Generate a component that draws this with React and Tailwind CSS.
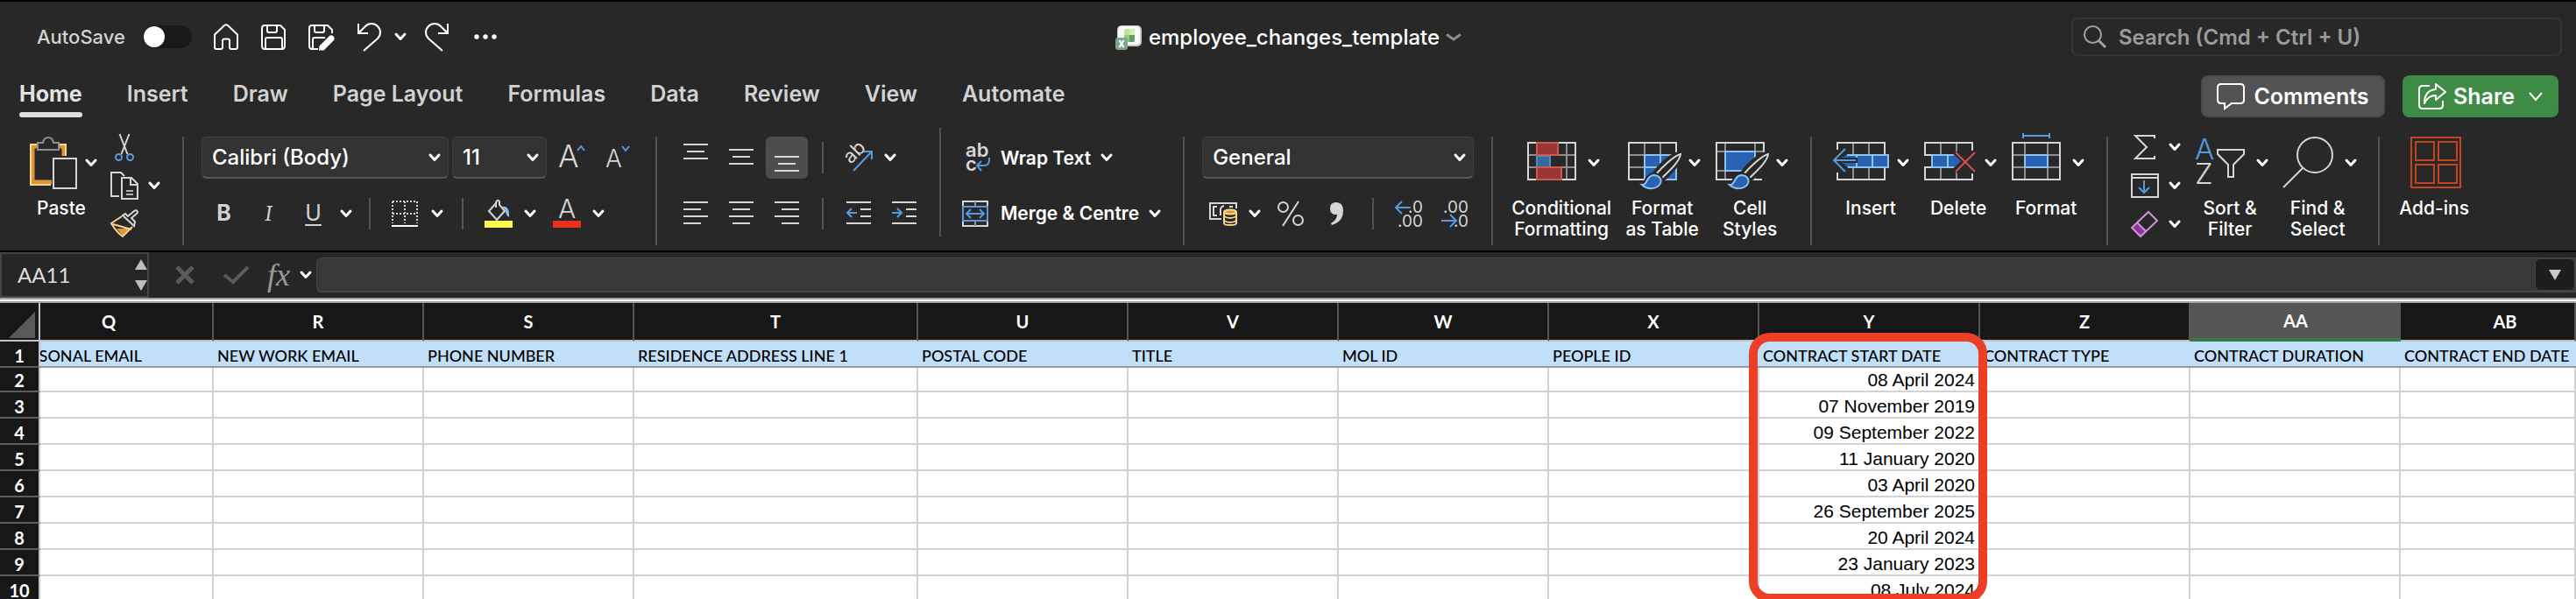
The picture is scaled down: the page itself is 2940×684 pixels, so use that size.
import clsx from 'clsx';

const LINE = '#d6d6d6';
const DIM = '#8f8f8f';
const SKY = '#559bde';
const FILL = '#2962b0';
const EDGE = '#8ec0f0';
const PANEL = '#282828';

const Icon = ({ w, h, children, className }) => (
  <svg
    width={w}
    height={h}
    viewBox={`0 0 ${w} ${h}`}
    fill="none"
    stroke={LINE}
    strokeWidth="2"
    aria-hidden="true"
    className={clsx('shrink-0 overflow-visible', className)}
  >
    {children}
  </svg>
);

const Chevron = ({ className }) => (
  <Icon w={12} h={8} className={className}>
    <path d="M1 1L6 6.500L11 1" stroke="white" strokeWidth="3" strokeLinecap="round" strokeLinejoin="round" />
  </Icon>
);

const Divider = ({ className }) => <div className={clsx('w-0.5 shrink-0 bg-[#535353]', className)} />;

const tabs = ['Home', 'Insert', 'Draw', 'Page Layout', 'Formulas', 'Data', 'Review', 'View', 'Automate'];

const TitleBar = () => (
  <header className="grid h-20 grid-cols-[1fr_auto_1fr] items-center">
    <div className="flex items-center pl-[42px]">
      <label htmlFor="autosave" className="text-[22px] font-medium text-[#d2d2d2]">AutoSave</label>
      <span className="relative ml-5 flex h-[26px] w-14 rounded-full bg-[#191919]">
        <input id="autosave" type="checkbox" role="switch" className="peer h-full w-full appearance-none" />
        <span className="pointer-events-none absolute left-px top-px h-6 w-6 rounded-full bg-white" />
      </span>
      <button aria-label="Home page" className="ml-6">
        <Icon w={30} h={32}>
          <path d="M2 13.500L13 3Q15 1.500 17 3L28 13.500V28Q28 30 26 30H21Q19 30 19 28V20.500Q19 18.500 17 18.500H13Q11 18.500 11 20.500V28Q11 30 9 30H4Q2 30 2 28Z" stroke="white" />
        </Icon>
      </button>
      <button aria-label="Save" className="ml-6">
        <Icon w={30} h={32}>
          <path d="M5 3H23L28 8V26Q28 30 25 30H5Q2 30 2 26V6Q2 3 5 3ZM8 3V9Q8 11 10 11H17Q19 11 19 9V3M6 30V19Q6 17 8 17H23Q25 17 25 19V30" stroke="white" />
        </Icon>
      </button>
      <button aria-label="Save as" className="ml-6">
        <Icon w={32} h={32}>
          <path d="M28 12V8L23 3H5Q2 3 2 6V26Q2 30 5 30H12M8 3V9Q8 11 10 11H17Q19 11 19 9V3M6 30V19Q6 17 8 17H20" stroke="white" />
          <path d="M17 28L27 18" stroke="white" strokeWidth="7" strokeLinecap="round" />
          <path d="M13 32L14 26L18 30Z" fill="white" stroke="none" />
        </Icon>
      </button>
      <button aria-label="Undo" className="ml-6">
        <Icon w={28} h={32}>
          <path d="M2 1V12H13M2 12L10 4C14 0 20 0 24 4C28 8 28 14 24 18L8 32" stroke="white" />
        </Icon>
      </button>
      <button aria-label="Undo history" className="ml-4"><Chevron /></button>
      <button aria-label="Redo" className="ml-[22px]">
        <Icon w={28} h={32}>
          <path d="M26 1V12H15M26 12L18 4C14 0 8 0 4 4C0 8 0 14 4 18L20 32" stroke="white" />
        </Icon>
      </button>
      <button aria-label="More commands" className="ml-7">
        <Icon w={26} h={6}>
          <g fill="white" stroke="none">
            <circle cx="3" cy="3" r="2.700" />
            <circle cx="13" cy="3" r="2.700" />
            <circle cx="23" cy="3" r="2.700" />
          </g>
        </Icon>
      </button>
    </div>

    <button className="flex items-center pt-0.5">
      <Icon w={30} h={28}>
        <g stroke="none">
          <rect x="2" y="0" width="28" height="24" rx="5" fill="#c9c9c9" />
          <rect x="3" y="1" width="25" height="21" rx="4" fill="#fafafa" />
          <path d="M10 6Q10 4 12 4H22V11H10Z" fill="#b9e6a4" />
          <path d="M16 4H20Q22 4 22 6V11H16Z" fill="#cdf0b0" />
          <path d="M10 11H16V19H10Z" fill="#8fc98a" />
          <path d="M16 11H22V17Q22 19 20 19H16Z" fill="#619a66" />
          <rect x="0" y="14" width="14" height="14" rx="3" fill="#7ba88b" />
        </g>
        <path d="M4.500 17L9.500 25M9.500 17L4.500 25" stroke="white" strokeWidth="2.200" />
      </Icon>
      <span className="ml-2 text-[24px] font-medium text-white">employee_changes_template</span>
      <Icon w={16} h={8} className="ml-2">
        <path d="M1 1L8 6L15 1" stroke="#8c8c8c" strokeWidth="3" strokeLinecap="round" strokeLinejoin="round" />
      </Icon>
    </button>

    <div className="mr-4 flex h-11 w-[560px] items-center justify-self-end rounded-lg border-2 border-[#363636] pl-3">
      <Icon w={26} h={26}>
        <circle cx="10.500" cy="10.500" r="9.500" stroke="#a2a2a2" />
        <path d="M17.500 17.500L25 25" stroke="#a2a2a2" strokeWidth="3" />
      </Icon>
      <input
        type="text"
        aria-label="Search"
        placeholder="Search (Cmd + Ctrl + U)"
        className="ml-3.5 w-full bg-transparent pt-0.5 text-[24px] font-semibold text-white outline-none placeholder:text-[#9b9b9b]"
      />
    </div>
  </header>
);

const TabBar = () => (
  <div className="flex h-[54px] items-end justify-between pb-0.5 pl-[22px] pr-5">
    <nav className="flex gap-[51px]">
      {tabs.map((tab, i) => (
        <a
          key={tab}
          href="#"
          className={clsx('text-[25px] leading-7', i === 0 ? 'font-bold text-[#e2e2e2]' : 'font-semibold text-[#d2d2d2]')}
        >
          {tab}
          <span className={clsx('mt-[7px] block h-1.5 rounded-full', i === 0 && 'bg-[#dedede]')} />
        </a>
      ))}
    </nav>
    <div className="flex gap-5">
      <button className="flex h-12 w-[210px] items-center justify-center gap-2.5 rounded-lg border-2 border-[#4b4b4b] bg-[#535353] text-[25px] font-semibold text-white">
        <Icon w={32} h={32}>
          <path d="M5 2H27Q31 2 31 6V20Q31 24 27 24H17L9 30V24H5Q1 24 1 20V6Q1 2 5 2Z" stroke="white" />
        </Icon>
        <span className="pt-0.5">Comments</span>
      </button>
      <button className="flex h-12 w-[178px] items-center justify-center rounded-lg bg-[#3e8b46] text-[25px] font-semibold text-white">
        <Icon w={32} h={32}>
          <path d="M13 4H5Q1 4 1 8V26Q1 30 5 30H24Q28 30 28 26V21" stroke="white" />
          <path d="M7 24Q7 9 20 8V2L31 11L20 20V15Q11 15 7 24Z" stroke="white" strokeLinejoin="round" />
        </Icon>
        <span className="ml-2 pt-0.5">Share</span>
        <Icon w={16} h={10} className="ml-4">
          <path d="M1 1L8 9L15 1" stroke="white" />
        </Icon>
      </button>
    </div>
  </div>
);

const Select = ({ label, value, className }) => (
  <span className={clsx('relative flex h-12', className)}>
    <select
      aria-label={label}
      className="h-full w-full appearance-none rounded-md border border-b-2 border-[#404040] border-b-[#565656] bg-[#333333] pl-[11px] text-[24px] font-medium text-white"
    >
      <option>{value}</option>
    </select>
    <Chevron className="pointer-events-none absolute right-2.5 top-5" />
  </span>
);

// Rows of an alignment glyph as [x, width], eight pixels apart
const Lines = ({ rows, top, h }) => (
  <Icon w={28} h={h}>
    {rows.map(([x, w], i) => (
      <rect key={i} x={x} y={top + i * 8} width={w} height="2" fill={LINE} stroke="none" />
    ))}
  </Icon>
);

const centered = [[0, 28], [4, 20], [0, 28]];

const ToolButton = ({ label, active, className, children }) => (
  <button
    aria-label={label}
    className={clsx('flex items-center justify-center', className, active && 'rounded-md bg-[#4d4d4d]')}
  >
    {children}
  </button>
);

const BigButton = ({ lines, icon, chevron = true, className }) => (
  <button className={clsx('flex flex-col items-center text-[21px] font-medium leading-6 text-white', className)}>
    <span className="flex h-[60px] items-center">
      {icon}
      {chevron && <Chevron className="ml-3.5" />}
    </span>
    <span className="mt-2.5 block pr-1">
      {lines.map((line) => (
        <span key={line} className="block whitespace-nowrap">{line}</span>
      ))}
    </span>
  </button>
);

const PasteIcon = () => (
  <Icon w={54} h={60} className="-mr-1">
    <path d="M25 52H3V11H39V22" stroke="#dc963a" strokeWidth="5" />
    <path d="M24 55H1V9H41V22" stroke="#f6d78c" />
    <path d="M9 7H15Q16 1 21 1Q26 1 27 7H33V15H9Z" fill={PANEL} stroke="#8f8f8f" />
    <rect x="27" y="25" width="26" height="34" fill={PANEL} />
  </Icon>
);

const Frame = ({ children, v = [19, 37], hz = [21, 35] }) => (
  <>
    {v.map((x) => <path key={x} d={`M${x} 7V49`} stroke={DIM} />)}
    {hz.map((y) => <path key={y} d={`M1 ${y}H55`} stroke={DIM} />)}
    <rect x="1" y="7" width="54" height="42" />
    {children}
  </>
);

const Brush = () => (
  <g>
    <path d="M60 20C50 22 36 34 30 45L37 50C46 42 58 30 60 20Z" fill={PANEL} stroke={PANEL} strokeWidth="7" />
    <path d="M60 20C52 22 38 36 31 44L37 49C46 40 59 29 60 20Z" fill={PANEL} />
    <path d="M16 55C23 56 20 45 29 44C36 44 40 50 36 55C32 60 22 61 16 55Z" fill={FILL} stroke={PANEL} strokeWidth="6" />
    <path d="M16 55C23 56 20 45 29 44C36 44 40 50 36 55C32 60 22 61 16 55Z" fill={FILL} stroke={EDGE} />
  </g>
);

const ConditionalIcon = () => (
  <Icon w={56} h={60}>
    <Frame v={[11, 45]}>
      <rect x="11" y="22" width="30" height="12" fill={PANEL} stroke="none" />
      <rect x="11" y="22" width="15" height="13" fill="#366a9f" stroke="#4d8fc4" />
      <rect x="11" y="7" width="24" height="14" fill="#9a3533" stroke="#c95a57" />
      <rect x="11" y="35" width="28" height="14" fill="#9a3533" stroke="#c95a57" />
    </Frame>
  </Icon>
);

const FormatTableIcon = () => (
  <Icon w={56} h={60}>
    <Frame>
      <path d="M19 21H55V49H19ZM37 21V49M19 35H55" fill={FILL} stroke={EDGE} />
      <Brush />
    </Frame>
  </Icon>
);

const CellStylesIcon = () => (
  <Icon w={56} h={60}>
    <Frame v={[11, 45]} hz={[17, 39]}>
      <rect x="11" y="17" width="34" height="22" fill={FILL} stroke={EDGE} />
      <path d="M55 18V51" stroke={PANEL} strokeWidth="4" />
      <Brush />
    </Frame>
  </Icon>
);

const InsertIcon = () => (
  <Icon w={56} h={60}>
    <Frame hz={[]}>
      <path d="M0 15V41" stroke={PANEL} strokeWidth="5" />
      <path d="M6 21H59V35H6Z" fill={FILL} stroke="none" />
      <path d="M12 21H59V35H12M23 21V35M41 21V35" stroke={EDGE} />
      <path d="M12 14L-1 27L12 40" stroke={PANEL} strokeWidth="8" />
      <path d="M6 23H20V31H6Z" fill={FILL} stroke="none" />
      <path d="M-1 27H24" stroke={PANEL} strokeWidth="6" />
      <path d="M10 14L-3 27L10 40M-3 27H22" stroke={SKY} />
    </Frame>
  </Icon>
);

const DeleteIcon = () => (
  <Icon w={56} h={60}>
    <path d="M19 7V21M19 35V49M37 7V21M37 35V49" stroke={DIM} />
    <path d="M55 16V7H1V21H9M9 35H1V49H55V42" />
    <path d="M9 21H35L41 28L35 35H9Z" fill={FILL} stroke="none" />
    <path d="M34 21H9V35H34M27 21V35" stroke={EDGE} />
    <path d="M36 18L58 40M58 18L36 40" stroke={PANEL} strokeWidth="7" />
    <path d="M35 21L42 28L35 35Z" fill={FILL} stroke="none" />
    <path d="M36 18L58 40M58 18L36 40" stroke="#d4504c" />
  </Icon>
);

const FormatIcon = () => (
  <Icon w={56} h={60}>
    <Frame v={[15, 41]}>
      <rect x="15" y="21" width="26" height="14" fill={FILL} stroke={EDGE} />
      <path d="M13 -1H43M13 -4V2M43 -4V2" stroke={SKY} />
    </Frame>
  </Icon>
);

const SortIcon = () => (
  <Icon w={56} h={60}>
    <g fontSize="33" fontWeight="300" stroke="none">
      <text x="-1" y="26" fill={SKY}>A</text>
      <text x="-1" y="54" fill={LINE}>Z</text>
    </g>
    <path d="M25 15H55V20L43 32V46H37V32L25 20Z" />
  </Icon>
);

const FindIcon = () => (
  <Icon w={58} h={60}>
    <circle cx="37" cy="21" r="20" />
    <path d="M23 36L1 58" />
  </Icon>
);

const AddinsIcon = () => (
  <Icon w={58} h={60}>
    <g stroke="#c2451f">
      <rect x="1" y="1" width="56" height="57" />
      <rect x="6" y="6" width="21" height="21" />
      <rect x="32" y="6" width="21" height="21" />
      <rect x="6" y="32" width="21" height="21" />
      <rect x="32" y="32" width="21" height="21" />
    </g>
  </Icon>
);

const Clipboard = () => (
  <div className="flex gap-4 pl-[34px] pr-[26px]">
    <BigButton lines={['Paste']} icon={<PasteIcon />} className="w-[76px]" />
    <div className="-mt-1 flex flex-col gap-3">
      <ToolButton label="Cut" className="h-8 w-8">
        <Icon w={22} h={32}>
          <path d="M5.500 1L14.500 24M16.500 1L7.500 24" />
          <circle cx="4.500" cy="27.500" r="3.500" stroke={SKY} />
          <circle cx="17.500" cy="27.500" r="3.500" stroke={SKY} />
        </Icon>
      </ToolButton>
      <ToolButton label="Copy" className="h-8">
        <Icon w={32} h={32}>
          <path d="M10 28H1V1H12L16 5" />
          <path d="M13 7H24L31 14V31H13ZM23 7V15H31" />
          <path d="M18 22H26M18 26H26" stroke="#b0b0b0" />
        </Icon>
        <Chevron className="ml-3" />
      </ToolButton>
      <ToolButton label="Format painter" className="h-8 w-8">
        <Icon w={32} h={32}>
          <path d="M7 21L23 21L14 29Z" fill="#dc963a" stroke="none" />
          <path d="M13 7L1 15Q6 24 14 30L25 19M3 16L24 22" stroke="#f6d78c" />
          <path d="M14 6L27 18L28 13L24 9L31 3Q31 -1 27 1L20 7L17 4Z" />
        </Icon>
      </ToolButton>
    </div>
  </div>
);

const FontGroup = () => (
  <div className="pl-5 pr-7">
    <div className="flex items-center">
      <Select label="Font" value="Calibri (Body)" className="w-[282px]" />
      <Select label="Font size" value="11" className="ml-1 w-[108px]" />
      <ToolButton label="Increase font size" className="ml-3.5 w-[30px]">
        <Icon w={30} h={34}>
          <text x="-1" y="28" fontSize="35" fontWeight="300" fill={LINE} stroke="none">A</text>
          <path d="M21 9L25 4L29 9" stroke={SKY} />
        </Icon>
      </ToolButton>
      <ToolButton label="Decrease font size" className="ml-6 w-7">
        <Icon w={28} h={34}>
          <text x="-1" y="28" fontSize="28" fontWeight="300" fill={LINE} stroke="none">A</text>
          <path d="M18 4L22 9L26 4" stroke={SKY} />
        </Icon>
      </ToolButton>
    </div>
    <div className="mt-[22px] flex h-9 items-center text-[25px] text-[#d2d2d2]">
      <button className="w-[51px] font-bold">B</button>
      <button className="w-[51px] font-serif italic">I</button>
      <button className="w-[51px] underline underline-offset-4">U</button>
      <Chevron className="ml-1.5" />
      <Divider className="ml-5 h-9" />
      <ToolButton label="Borders" className="ml-6">
        <Icon w={30} h={30}>
          <path d="M1 1H29M1 1V26M29 1V26M1 15H29M15 1V26" strokeDasharray="2 2" />
          <path d="M0 29H30" stroke="white" />
        </Icon>
        <Chevron className="ml-4" />
      </ToolButton>
      <Divider className="ml-[22px] h-9" />
      <ToolButton label="Fill colour" className="ml-6">
        <Icon w={32} h={32}>
          <path d="M14 3L5 13L14 23L23 13L17 6V2Q15 -1 13 3V9" />
          <path d="M19 8Q29 6 28 20Q24 18 24 12Z" fill={EDGE} stroke="none" />
          <rect x="0" y="24" width="32" height="8" fill="#fdfc4e" stroke="none" />
        </Icon>
        <Chevron className="ml-3.5" />
      </ToolButton>
      <ToolButton label="Font colour" className="ml-5">
        <Icon w={32} h={32}>
          <text x="6" y="21" fontSize="30" fontWeight="300" fill={LINE} stroke="none">A</text>
          <rect x="0" y="24" width="32" height="8" fill="#e8321f" stroke="none" />
        </Icon>
        <Chevron className="ml-3.5" />
      </ToolButton>
    </div>
  </div>
);

const AlignGroup = () => (
  <div className="pl-5 pr-4">
    <div className="flex h-12 items-center">
      <div className="flex gap-1">
        <ToolButton label="Top align" className="h-12 w-12"><Lines rows={centered} top={8} h={48} /></ToolButton>
        <ToolButton label="Middle align" className="h-12 w-12"><Lines rows={centered} top={14} h={48} /></ToolButton>
        <ToolButton label="Bottom align" active className="h-12 w-12"><Lines rows={centered} top={22} h={48} /></ToolButton>
      </div>
      <Divider className="ml-4 h-9" />
      <ToolButton label="Orientation" className="ml-6">
        <Icon w={32} h={32}>
          <text x="7" y="24" fontSize="22" fill={LINE} stroke="none" transform="rotate(-45 7 24)">ab</text>
          <path d="M10 31L30 10M22 9H31V18" stroke={SKY} />
        </Icon>
        <Chevron className="ml-3.5" />
      </ToolButton>
    </div>
    <div className="mt-[22px] flex h-9 items-center">
      <div className="flex gap-1">
        <ToolButton label="Align left" className="w-12">
          <Lines rows={[[0, 28], [0, 20], [0, 28], [0, 20]]} top={4} h={36} />
        </ToolButton>
        <ToolButton label="Centre" className="w-12">
          <Lines rows={[[0, 28], [4, 20], [0, 28], [4, 20]]} top={4} h={36} />
        </ToolButton>
        <ToolButton label="Align right" className="w-12">
          <Lines rows={[[0, 28], [8, 20], [0, 28], [8, 20]]} top={4} h={36} />
        </ToolButton>
      </div>
      <Divider className="ml-4 h-9" />
      <div className="ml-4 flex gap-1">
        <ToolButton label="Decrease indent" className="w-12">
          <Icon w={28} h={36}>
            <path d="M0 5H28M16 13H28M16 21H28M0 29H28" />
            <path d="M12 17H1M6 12L1 17L6 22" stroke={SKY} />
          </Icon>
        </ToolButton>
        <ToolButton label="Increase indent" className="w-12">
          <Icon w={28} h={36}>
            <path d="M0 5H28M16 13H28M16 21H28M0 29H28" />
            <path d="M0 17H11M6 12L11 17L6 22" stroke={SKY} />
          </Icon>
        </ToolButton>
      </div>
    </div>
  </div>
);

const WrapGroup = () => (
  <div className="pl-6 pr-[26px] text-[21px] font-semibold text-white">
    <button className="flex h-12 items-center">
      <Icon w={30} h={32}>
        <g fontSize="22" fill={LINE} stroke="none">
          <text x="4" y="15">ab</text>
          <text x="4" y="31">c</text>
        </g>
        <path d="M31 16Q32 25 25 25H17M22 20L17 25L22 31" stroke={SKY} />
      </Icon>
      <span className="ml-3.5 pt-0.5">Wrap Text</span>
      <Chevron className="ml-3" />
    </button>
    <button className="mt-[22px] flex h-9 items-center">
      <Icon w={30} h={30}>
        <rect x="1" y="1" width="28" height="28" />
        <path d="M15 1V6M15 24V29" stroke={DIM} />
        <rect x="1" y="7" width="28" height="16" fill={PANEL} stroke={SKY} />
        <path d="M5 15H25M10 10L5 15L10 20M20 10L25 15L20 20" stroke={SKY} />
      </Icon>
      <span className="ml-3.5 whitespace-nowrap">Merge &amp; Centre</span>
      <Chevron className="ml-3" />
    </button>
  </div>
);

const NumberGroup = () => (
  <div className="pl-5 pr-5">
    <Select label="Number format" value="General" className="w-[310px]" />
    <div className="mt-[22px] flex h-9 items-center">
      <ToolButton label="Accounting format" className="ml-2">
        <Icon w={32} h={28}>
          <path d="M14 20H1V2H31V8" />
          <path d="M9 6H5V16H9M17 5Q12 6 13 12V16M23 6H27" />
          <path d="M17 12V25Q17 27 24 27Q31 27 31 25V12" fill={PANEL} stroke="#f6d78c" />
          <ellipse cx="24" cy="12" rx="7" ry="2.500" fill="#dc963a" stroke="#f6d78c" />
          <path d="M17 17Q24 21 31 17M17 22Q24 26 31 22" stroke="#f6d78c" />
        </Icon>
        <Chevron className="ml-3.5" />
      </ToolButton>
      <ToolButton label="Percent style" className="ml-5">
        <Icon w={30} h={30}>
          <circle cx="6.500" cy="7.500" r="5.500" />
          <circle cx="23.500" cy="22.500" r="5.500" />
          <path d="M24 1L6 29" />
        </Icon>
      </ToolButton>
      <ToolButton label="Comma style" className="ml-[30px]">
        <Icon w={16} h={26}>
          <path d="M7 0Q15 0 15 10Q15 22 2 26L1 24Q8 20 8 14Q0 15 0 7Q0 0 7 0Z" fill={LINE} stroke="none" />
        </Icon>
      </ToolButton>
      <Divider className="ml-8 h-9" />
      <ToolButton label="Increase decimal" className="ml-6">
        <Icon w={32} h={32}>
          <g fontSize="19" fill={LINE} stroke="none" textAnchor="end">
            <text x="32" y="15">.0</text>
            <text x="32" y="31">.00</text>
          </g>
          <path d="M18 9H1M8 2L1 9L8 16" stroke={SKY} />
        </Icon>
      </ToolButton>
      <ToolButton label="Decrease decimal" className="ml-5">
        <Icon w={32} h={32}>
          <g fontSize="19" fill={LINE} stroke="none" textAnchor="end">
            <text x="32" y="15">.00</text>
            <text x="32" y="31">.0</text>
          </g>
          <path d="M1 24H18M11 17L18 24L11 31" stroke={SKY} />
        </Icon>
      </ToolButton>
    </div>
  </div>
);

const EditingTools = () => (
  <div className="-mt-1 flex flex-col gap-3">
    <ToolButton label="AutoSum" className="h-8">
      <Icon w={32} h={28}>
        <path d="M27 4V1H5L18 14L5 27H27V24" />
      </Icon>
      <Chevron className="ml-3" />
    </ToolButton>
    <ToolButton label="Fill" className="h-8">
      <Icon w={32} h={28}>
        <path d="M1 1H31V27H1ZM1 5H31" />
        <path d="M15 8V22M9 16L15 22L21 16" stroke={SKY} />
      </Icon>
      <Chevron className="ml-3" />
    </ToolButton>
    <ToolButton label="Clear" className="h-8">
      <Icon w={32} h={32}>
        <path d="M1 20L7 14L17 24L11 30Z" fill="#8a35a0" stroke="none" />
        <path d="M20 2L30 12L11 30L1 20ZM7 14L17 24" stroke="#cf93da" />
      </Icon>
      <Chevron className="ml-3" />
    </ToolButton>
  </div>
);

const Ribbon = () => (
  <section className="flex h-[150px] pt-5">
    <Clipboard />
    <Divider className="h-[124px]" />
    <FontGroup />
    <Divider className="h-[124px]" />
    <AlignGroup />
    <Divider className="-mt-2.5 h-[124px]" />
    <WrapGroup />
    <Divider className="h-[124px]" />
    <NumberGroup />
    <Divider className="h-[124px]" />
    <div className="flex gap-[18px] pl-6 pr-[26px]">
      <BigButton lines={['Conditional', 'Formatting']} icon={<ConditionalIcon />} className="w-28" />
      <BigButton lines={['Format', 'as Table']} icon={<FormatTableIcon />} className="w-[82px]" />
      <BigButton lines={['Cell', 'Styles']} icon={<CellStylesIcon />} className="w-[82px]" />
    </div>
    <Divider className="h-[124px]" />
    <div className="flex gap-[18px] pl-7 pr-[26px]">
      <BigButton lines={['Insert']} icon={<InsertIcon />} className="w-[82px]" />
      <BigButton lines={['Delete']} icon={<DeleteIcon />} className="w-[82px]" />
      <BigButton lines={['Format']} icon={<FormatIcon />} className="w-[82px]" />
    </div>
    <Divider className="h-[124px]" />
    <div className="flex gap-[18px] pl-[26px] pr-[26px]">
      <EditingTools />
      <BigButton lines={['Sort &', 'Filter']} icon={<SortIcon />} className="w-[82px]" />
      <BigButton lines={['Find &', 'Select']} icon={<FindIcon />} className="w-[82px]" />
    </div>
    <Divider className="h-[124px]" />
    <BigButton lines={['Add-ins']} icon={<AddinsIcon />} chevron={false} className="ml-6 w-20" />
  </section>
);

const FormulaBar = () => (
  <div className="flex h-[54px] items-center border-t-2 border-black bg-[#262626]">
    <div className="flex h-full w-[170px] items-center border-2 border-[#444444] pl-[18px]">
      <input
        aria-label="Name box"
        defaultValue="AA11"
        className="w-full bg-transparent font-[Lato,sans-serif] text-[24px] text-[#dedede] outline-none"
      />
      <Icon w={14} h={36}>
        <path d="M0 12L7 0L14 12ZM0 24L7 36L14 24Z" fill="#bdbdbd" stroke="none" />
      </Icon>
    </div>
    <button aria-label="Cancel" className="ml-[31px]">
      <Icon w={20} h={20}>
        <path d="M1 1L19 19M19 1L1 19" stroke="#5a5a5a" strokeWidth="5" />
      </Icon>
    </button>
    <button aria-label="Enter" className="ml-[34px]">
      <Icon w={30} h={20}>
        <path d="M1 10L11 18L28 1" stroke="#5a5a5a" strokeWidth="4" />
      </Icon>
    </button>
    <button className="ml-5 font-[Liberation_Serif,serif] text-[36px] italic leading-9 text-[#9b9b9b]">fx</button>
    <Chevron className="ml-3" />
    <div className="ml-1.5 flex h-10 flex-1 rounded-l-md border border-b-2 border-[#454545] bg-[#383838]">
      <input aria-label="Formula" className="flex-1 bg-transparent px-2 text-[22px] text-white outline-none" />
      <button
        aria-label="Expand formula bar"
        className="flex w-[46px] items-center justify-center rounded-md border border-[#454545] bg-[#1d1d1d]"
      >
        <Icon w={14} h={12}>
          <path d="M0 0H14L7 12Z" fill="#c9c9c9" stroke="none" />
        </Icon>
      </button>
    </div>
  </div>
);

const columns = [
  { id: 'Q', title: 'PERSONAL EMAIL', width: 198 },
  { id: 'R', title: 'NEW WORK EMAIL', width: 240 },
  { id: 'S', title: 'PHONE NUMBER', width: 240 },
  { id: 'T', title: 'RESIDENCE ADDRESS LINE 1', width: 324 },
  { id: 'U', title: 'POSTAL CODE', width: 240 },
  { id: 'V', title: 'TITLE', width: 240 },
  { id: 'W', title: 'MOL ID', width: 240 },
  { id: 'X', title: 'PEOPLE ID', width: 240 },
  { id: 'Y', title: 'CONTRACT START DATE', width: 252 },
  { id: 'Z', title: 'CONTRACT TYPE', width: 240 },
  { id: 'AA', title: 'CONTRACT DURATION', width: 240 },
  { id: 'AB', title: 'CONTRACT END DATE' },
];

const startDates = [
  '08 April 2024',
  '07 November 2019',
  '09 September 2022',
  '11 January 2020',
  '03 April 2020',
  '26 September 2025',
  '20 April 2024',
  '23 January 2023',
  '08 July 2024',
];

const rowHead = 'border-b-2 border-r-2 border-b-[#5c5c5c] border-r-[#c4c4c4] bg-[#171717] p-0 align-bottom text-[20px] font-bold leading-6 text-white';

const Sheet = () => (
  <table className="w-full table-fixed border-separate border-spacing-0 bg-white font-[Lato,sans-serif] text-black">
    <colgroup>
      <col style={{ width: 46 }} />
      {columns.map((c) => <col key={c.id} style={{ width: c.width }} />)}
    </colgroup>
    <thead>
      <tr className="h-11">
        <th aria-label="Select all" className="border-b-2 border-r-2 border-[#c4bfc0] bg-[#171717] p-0">
          <Icon w={30} h={30} className="ml-2.5 mt-2">
            <path d="M0 30H30V0Z" fill="#595959" stroke="none" />
          </Icon>
        </th>
        {columns.map(({ id }) => (
          <th
            key={id}
            scope="col"
            className={clsx(
              'p-0 text-[20px] font-bold leading-6 text-white',
              id === 'AA' ? 'border-b-4 border-[#3d7849] bg-[#565656]' : 'border-b-2 border-r-2 border-b-[#c4bfc0] border-r-[#565656] bg-[#171717]',
              id === 'Q' && 'pr-10',
              id === 'AB' && 'pl-10',
            )}
          >
            {id}
          </th>
        ))}
      </tr>
    </thead>
    <tbody>
      <tr className="h-[30px]">
        <th scope="row" className={rowHead}>1</th>
        {columns.map(({ id, title }) => (
          <td
            key={id}
            className="relative border-b-2 border-[#999999] bg-[#c2dff9] p-0 pl-1 align-bottom text-[18px] font-medium leading-6"
          >
            {id === 'Q' ? (
              // scrolled partly under the row numbers
              <span className="-ml-1 flex w-[116px] justify-end overflow-hidden whitespace-nowrap">{title}</span>
            ) : (
              <span className="block whitespace-nowrap">{title}</span>
            )}
            {id === 'Y' && (
              <span className="pointer-events-none absolute -left-3 -right-2 -top-2.5 z-10 h-[308px] rounded-3xl border-[10px] border-[#eb4026]" />
            )}
          </td>
        ))}
      </tr>
      {startDates.map((date, i) => (
        <tr key={date} className={i === 0 ? 'h-7' : 'h-[30px]'}>
          <th scope="row" className={rowHead}>{i + 2}</th>
          {columns.map(({ id }) => (
            <td
              key={id}
              className="whitespace-nowrap border-b-2 border-r-2 border-[#d3d3d3] p-0 pr-1 text-right align-bottom font-[Liberation_Sans,Arial,sans-serif] text-[21px] leading-6"
            >
              {id === 'Y' && date}
            </td>
          ))}
        </tr>
      ))}
    </tbody>
  </table>
);

export default function App() {
  return (
    <div className="h-screen overflow-hidden border-t-2 border-black bg-[#282828] font-[Inter,sans-serif]">
      <TitleBar />
      <TabBar />
      <Ribbon />
      <FormulaBar />
      <div className="h-1.5 border-y-2 border-[#a5a1a2] bg-[#f3f1f2]" />
      <Sheet />
    </div>
  );
}
